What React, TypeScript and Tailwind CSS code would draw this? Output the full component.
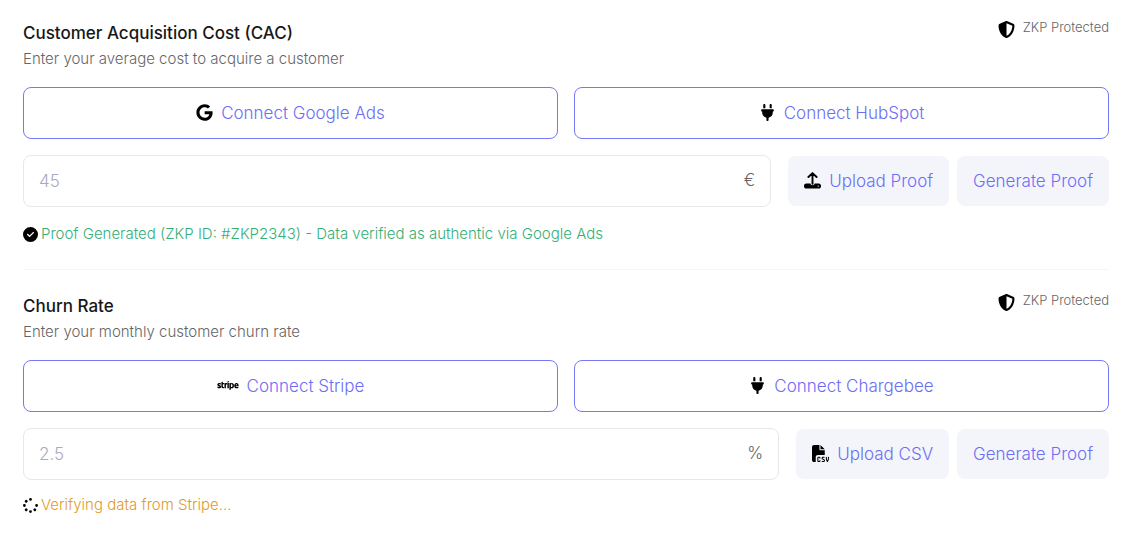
import type { ReactNode } from 'react';
import { FaCircleCheck, FaFileCsv, FaGoogle, FaPlug, FaShieldHalved, FaSpinner, FaStripe } from 'react-icons/fa6';

function UploadIcon() {
  return (
    <svg viewBox="0 0 17 17" className="size-[17px] text-black" fill="none" aria-hidden="true">
      <path d="M2.2 11.6h4.2c.2 1 1 1.7 2.1 1.7s1.9-.7 2.1-1.7h4.2c1.2 0 2.2 1 2.2 2.2v.6c0 1.2-1 2.2-2.2 2.2H2.2C1 16.600 0 15.600 0 14.400v-.6c0-1.200 1-2.200 2.200-2.200z" fill="currentColor" />
      <path d="M8.5 11.8V1.600M4.400 5 8.500 1.100 12.600 5" stroke="currentColor" strokeWidth="1.900" strokeLinecap="round" strokeLinejoin="round" />
      <circle cx="14.2" cy="14.1" r="0.7" fill="white" />
    </svg>
  );
}

function ConnectButton({ icon, children }: { icon: ReactNode; children: ReactNode }) {
  return (
    <button type="button" className="flex h-[52px] flex-1 items-center justify-center gap-2 rounded-lg border border-[#7678f5] bg-white pb-px text-[17px] leading-6 text-[#6c6ef5]">
      <span className="text-black">{icon}</span>
      {children}
    </button>
  );
}

function SoftButton({ icon, children }: { icon?: ReactNode; children: ReactNode }) {
  return (
    <button type="button" className="flex h-[50px] shrink-0 items-center gap-2 rounded-lg bg-[#f4f5fa] px-4 pb-px text-[17px] leading-6 text-[#6c6ef5]">
      {icon && <span className="text-black">{icon}</span>}
      {children}
    </button>
  );
}

type MetricProps = {
  id: string;
  title: string;
  hint: string;
  placeholder: string;
  unit: string;
  connectors: ReactNode;
  upload: ReactNode;
  status: ReactNode;
};

function Metric({ id, title, hint, placeholder, unit, connectors, upload, status }: MetricProps) {
  return (
    <section>
      <div className="flex items-start justify-between">
        <div>
          <label htmlFor={id} className="block text-[17px] leading-6 font-medium text-[#171717]">{title}</label>
          <p className="mt-0.5 text-[15px] leading-6 text-[#666666]">{hint}</p>
        </div>
        <div className="flex items-start gap-2 text-[13px] leading-3 text-[#666666]">
          <FaShieldHalved className="size-[17px] text-black" />
          ZKP Protected
        </div>
      </div>
      <div className="mt-4 flex gap-4">{connectors}</div>
      <div className="mt-4 flex items-center gap-[17px]">
        <div className="flex h-[52px] min-w-0 flex-1 items-center rounded-lg border border-[#e8e8ea] px-[15px]">
          <input id={id} type="text" placeholder={placeholder} className="min-w-0 flex-1 bg-transparent text-[17px] leading-6 text-[#171717] outline-none placeholder:text-[#aaa9bd]" />
          <span className="pb-0.5 text-[17px] leading-6 text-[#666666]">{unit}</span>
        </div>
        <div className="flex gap-2">
          {upload}
          <SoftButton>Generate Proof</SoftButton>
        </div>
      </div>
      {status}
    </section>
  );
}

export default function App() {
  return (
    <main className="bg-white pt-[21px] pr-[25px] pb-5 pl-[23px] font-['Inter',sans-serif] font-light">
      <Metric
        id="cac"
        title="Customer Acquisition Cost (CAC)"
        hint="Enter your average cost to acquire a customer"
        placeholder="45"
        unit="€"
        connectors={
          <>
            <ConnectButton icon={<FaGoogle className="size-[17px]" />}>Connect Google Ads</ConnectButton>
            <ConnectButton icon={<FaPlug className="size-[17px]" />}>Connect HubSpot</ConnectButton>
          </>
        }
        upload={<SoftButton icon={<UploadIcon />}>Upload Proof</SoftButton>}
        status={
          <p className="mt-4 flex items-center gap-[3px] text-[15px] leading-[22px] text-[#36ae76]">
            <FaCircleCheck className="size-[15px] text-black" />
            Proof Generated (ZKP ID: #ZKP2343) - Data verified as authentic via Google Ads
          </p>
        }
      />
      <hr className="mt-6 mb-6 border-[#f5f5f6]" />
      <Metric
        id="churn"
        title="Churn Rate"
        hint="Enter your monthly customer churn rate"
        placeholder="2.5"
        unit="%"
        connectors={
          <>
            <ConnectButton icon={<FaStripe className="h-[17px] w-[22px]" />}>Connect Stripe</ConnectButton>
            <ConnectButton icon={<FaPlug className="size-[17px]" />}>Connect Chargebee</ConnectButton>
          </>
        }
        upload={<SoftButton icon={<FaFileCsv className="size-[17px]" />}>Upload CSV</SoftButton>}
        status={
          <p className="mt-3.5 flex items-center gap-[3px] text-[15px] leading-[22px] text-[#e29a28]">
            <FaSpinner className="size-[15px] text-black" />
            Verifying data from Stripe...
          </p>
        }
      />
    </main>
  );
}
